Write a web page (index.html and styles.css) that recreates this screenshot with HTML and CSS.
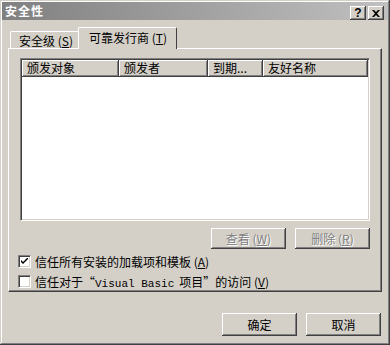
FILE: index.html
```html
<!DOCTYPE html>
<html lang="zh-CN">
<head>
  <meta charset="UTF-8">
  <title>安全性</title>
  <link rel="stylesheet" href="styles.css">
</head>
<body>

<div class="dialog">
  <div class="titlebar">
    <span class="title">安全性</span>
    <div class="title-buttons">
      <div class="cap-btn help">?</div>
      <div class="cap-btn close">
        <svg width="8" height="7" viewBox="0 0 8 7"><path d="M0 0h2l2 2 2-2h2L5 3.5 8 7H6L4 5 2 7H0l3-3.5z" fill="#000"/></svg>
      </div>
    </div>
  </div>

  <div class="tabs">
    <div class="tab">安全级 (<u>S</u>)</div>
    <div class="tab active">可靠发行商 (<u>T</u>)</div>
  </div>

  <div class="panel">
    <div class="list">
      <div class="list-header">
        <div class="col c1">颁发对象</div>
        <div class="col c2">颁发者</div>
        <div class="col c3">到期...</div>
        <div class="col c4">友好名称</div>
      </div>
      <div class="list-body"></div>
    </div>

    <div class="list-actions">
      <button class="btn" disabled>查看 (<u>W</u>)</button>
      <button class="btn" disabled>删除 (<u>R</u>)</button>
    </div>

    <div class="checks">
      <label class="check-row">
        <span class="box checked">
          <svg width="7" height="7" viewBox="0 0 7 7"><path d="M0 2l2 2 5-5v2L2 6 0 4z" fill="#000"/></svg>
        </span>
        <span class="check-text">信任所有安装的加载项和模板 (<u>A</u>)</span>
      </label>
      <label class="check-row">
        <span class="box"></span>
        <span class="check-text">信任对于<span class="quote">“</span><span class="mono">Visual Basic</span>项目<span class="quote">”</span>的访问 (<u>V</u>)</span>
      </label>
    </div>
  </div>

  <div class="footer">
    <button class="btn">确定</button>
    <button class="btn">取消</button>
  </div>
</div>

</body>
</html>
```

FILE: styles.css
```css
body {
  margin: 0;
  background: #d4d0c8;
  font-family: "Noto Sans CJK SC", "DejaVu Sans", sans-serif;
  font-size: 12px;
  color: #000;
}
.dialog {
  width: 390px;
  height: 345px;
  box-sizing: border-box;
  padding: 2px;
  background: #d4d0c8;
  box-shadow: inset -1px -1px #404040, inset 1px 1px #d4d0c8, inset -2px -2px #808080, inset 2px 2px #fff;
  display: flex;
  flex-direction: column;
}
u {
  text-decoration: underline;
  text-underline-offset: 1px;
}

/* title bar */
.titlebar {
  height: 18px;
  display: flex;
  justify-content: space-between;
  align-items: flex-start;
  background: linear-gradient(to right, #808080, #c0c0c0);
  color: #fff;
}
.title {
  font-weight: bold;
  line-height: 18px;
  padding-left: 3px;
  letter-spacing: 1px;
}
.title-buttons {
  display: flex;
  gap: 2px;
  margin-top: 4px;
  margin-right: 4px;
}
.cap-btn {
  width: 16px;
  height: 14px;
  box-sizing: border-box;
  background: #d4d0c8;
  box-shadow: inset -1px -1px #404040, inset 1px 1px #fff, inset -2px -2px #808080;
  display: flex;
  justify-content: center;
  align-items: center;
  color: #000;
}
.help {
  font-family: "Liberation Sans", sans-serif;
  font-weight: bold;
  font-size: 12px;
  line-height: 14px;
}

/* tabs */
.tabs {
  display: flex;
  align-items: flex-end;
  margin: 7px 0 -1px 6px;
  height: 22px;
}
.tab {
  height: 18px;
  box-sizing: border-box;
  padding: 1px 0 0 8px;
  margin-left: 2px;
  width: 70px;
  border-top: 1px solid #fff;
  border-left: 1px solid #fff;
  border-right: 1px solid #404040;
  border-radius: 2px 2px 0 0;
  line-height: 16px;
  white-space: nowrap;
}
.tab.active {
  position: relative;
  z-index: 1;
  height: 22px;
  width: 99px;
  margin-left: -2px;
  padding: 2px 0 0 10px;
  background: #d4d0c8;
}

/* panel */
.panel {
  margin: 0 6px;
  height: 244px;
  box-sizing: border-box;
  border-top: 1px solid #fff;
  border-left: 1px solid #fff;
  border-right: 1px solid #404040;
  border-bottom: 1px solid #404040;
  box-shadow: inset -1px -1px #808080;
  padding: 9px 11px 0 11px;
  display: flex;
  flex-direction: column;
}
.list {
  height: 163px;
  box-sizing: border-box;
  border: 1px solid;
  border-color: #808080 #fff #fff #808080;
  box-shadow: inset 1px 1px #404040, inset -1px -1px #d4d0c8;
  padding: 1px;
  display: flex;
  flex-direction: column;
  background: #fff;
}
.list-header {
  display: flex;
  height: 17px;
  background: #d4d0c8;
}
.col {
  box-sizing: border-box;
  height: 17px;
  line-height: 16px;
  padding-left: 5px;
  box-shadow: inset -1px -1px #404040, inset 1px 1px #fff, inset -2px -2px #808080;
  white-space: nowrap;
}
.c1 { width: 97px; }
.c2 { width: 89px; }
.c3 { width: 55px; }
.c4 { flex: 1; }
.list-body {
  flex: 1;
  background: #fff;
}

/* buttons */
.list-actions {
  display: flex;
  justify-content: flex-end;
  gap: 9px;
  margin-top: 7px;
}
.btn {
  width: 75px;
  height: 21px;
  font: inherit;
  color: #000;
  background: #d4d0c8;
  border: none;
  padding: 0;
  box-shadow: inset -1px -1px #404040, inset 1px 1px #fff, inset -2px -2px #808080;
}
.btn:disabled {
  color: #808080;
  text-shadow: 1px 1px #fff;
}

/* checkboxes */
.checks {
  margin-top: 2px;
  margin-left: -2px;
  display: flex;
  flex-direction: column;
}
.check-row {
  height: 20px;
  display: flex;
  align-items: center;
}
.check-text {
  white-space: nowrap;
}
.box {
  width: 13px;
  height: 13px;
  box-sizing: border-box;
  margin-right: 4px;
  background: #fff;
  border: 1px solid;
  border-color: #808080 #fff #fff #808080;
  box-shadow: inset 1px 1px #404040, inset -1px -1px #d4d0c8;
  display: flex;
  justify-content: center;
  align-items: center;
}
.quote {
  display: inline-block;
  width: 12px;
  text-align: center;
}
.mono {
  font-family: "Liberation Mono", "Noto Sans CJK SC", monospace;
  font-size: 11px;
  margin-right: 5px;
}

/* footer */
.footer {
  display: flex;
  justify-content: flex-end;
  gap: 9px;
  margin: 21px 7px 0 0;
}
.footer .btn {
  height: 23px;
}
```
